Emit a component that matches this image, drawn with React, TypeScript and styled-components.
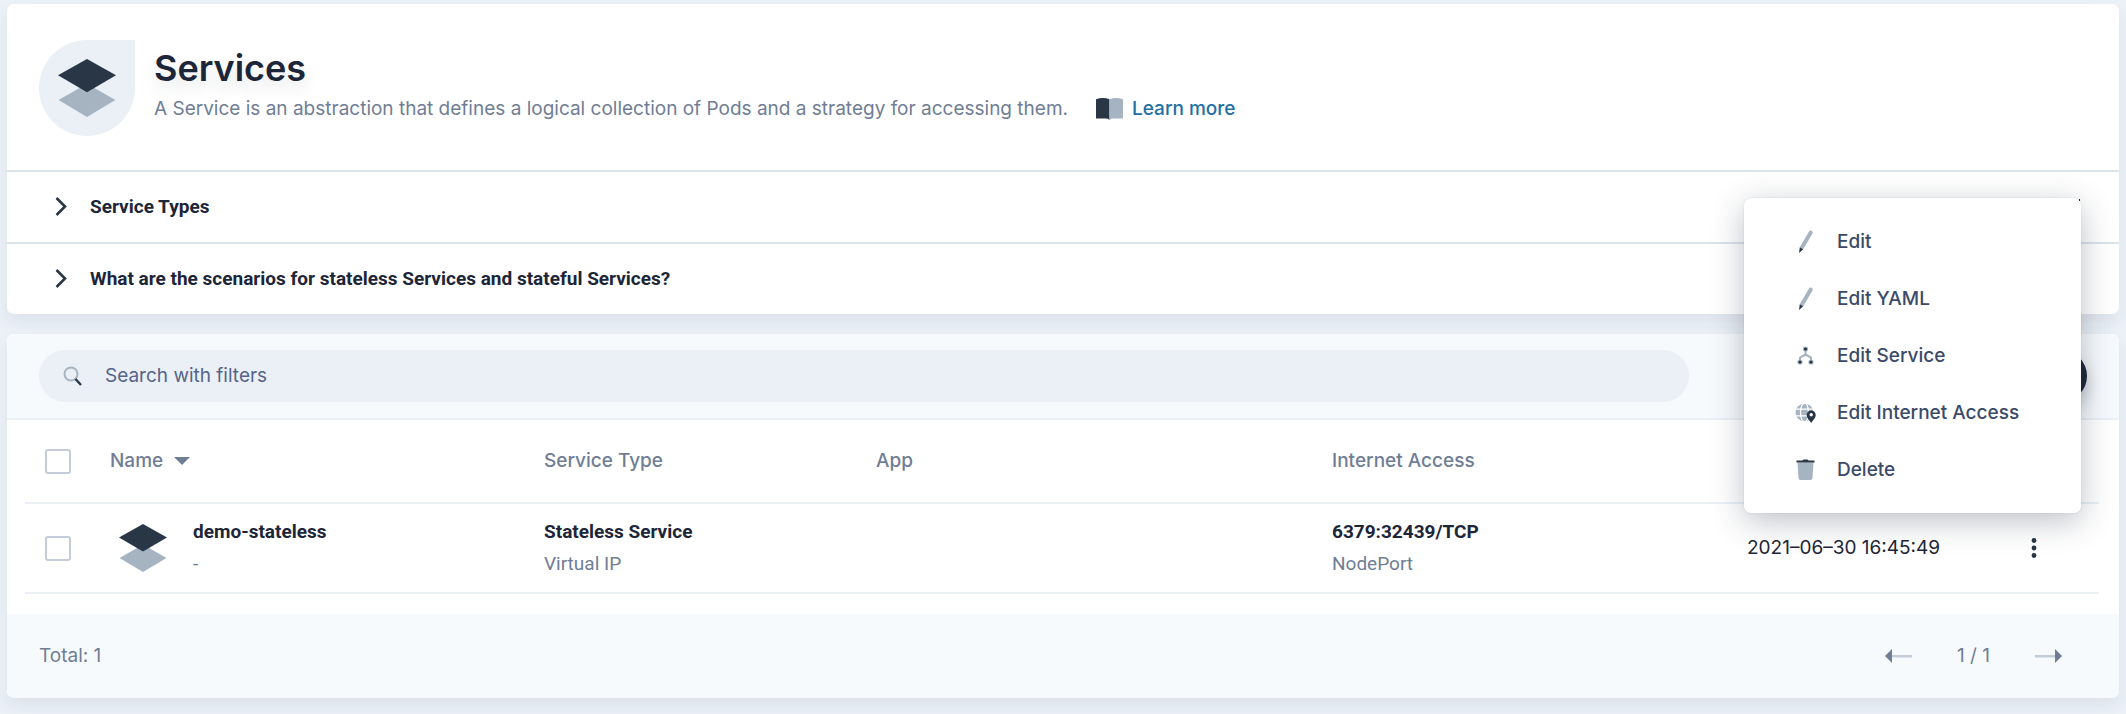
import React from 'react';
import styled, { createGlobalStyle } from 'styled-components';

const ink = '#1d2538';
const iconDark = '#283646';
const iconLight = '#a6b4c2';
const muted = '#6f7d95';
const line = '#eaf0f6';

const GlobalStyle = createGlobalStyle`
  *, *::before, *::after { box-sizing: border-box; }
  body {
    margin: 0;
    background: #ebf1f7;
    color: ${ink};
    font-family: Inter, 'Liberation Sans', sans-serif;
    font-size: 19px;
    line-height: 32px;
  }
  button, input { font: inherit; color: inherit; }
`;

const Page = styled.main`
  display: flex;
  flex-direction: column;
  gap: 20px;
  padding: 4px 7px 16px;
`;

const Card = styled.section`
  background: #fff;
  border-radius: 7px;
  box-shadow: 0 8px 16px rgba(36, 46, 66, 0.07);
`;

const Banner = styled.header`
  display: flex;
  gap: 19px;
  padding: 36px 32px 34px;
`;

const IconTile = styled.div`
  display: flex;
  align-items: center;
  justify-content: center;
  width: 96px;
  height: 96px;
  background: #eaf0f6;
  border-radius: 48px 0 48px 48px;
`;

const BannerText = styled.div`
  padding-top: 8px;
`;

const Title = styled.h1`
  margin: 0;
  font-size: 36px;
  font-weight: 600;
  line-height: 40px;
  text-shadow: 0 8px 16px rgba(36, 46, 66, 0.12);
`;

const Description = styled.p`
  display: flex;
  align-items: center;
  margin: 0;
  color: ${muted};
  line-height: 42px;
`;

const LearnMore = styled.a`
  display: flex;
  align-items: center;
  gap: 9px;
  margin-left: 28px;
  color: #216fa3;
  font-weight: 500;
  text-decoration: none;
`;

const Question = styled.button`
  display: flex;
  align-items: center;
  gap: 23px;
  width: 100%;
  height: 72px;
  padding: 0 48px;
  border: 0;
  border-top: 2px solid #dbe3ec;
  background: none;
  font-family: Roboto, sans-serif;
  font-weight: 700;
  text-align: left;
`;

const Toolbar = styled.div`
  display: flex;
  justify-content: space-between;
  padding: 16px 32px;
  background: #f6fafd;
  border-bottom: 2px solid ${line};
  border-radius: 7px 7px 0 0;
`;

const SearchBox = styled.label`
  display: flex;
  flex: 1;
  align-items: center;
  gap: 22px;
  height: 52px;
  padding: 0 24px;
  background: #eaf0f6;
  border-radius: 26px;
`;

const SearchInput = styled.input`
  flex: 1;
  padding: 0;
  border: 0;
  outline: 0;
  background: none;
  &::placeholder { color: #56648a; opacity: 1; }
`;

const Actions = styled.div`
  display: flex;
  justify-content: flex-end;
  width: 398px;
`;

const CreateButton = styled.button`
  width: 160px;
  height: 52px;
  border: 0;
  border-radius: 26px;
  background: ${ink};
  box-shadow: 0 8px 16px rgba(36, 46, 66, 0.28);
`;

const TableArea = styled.div`
  padding: 0 20px 20px 18px;
`;

const Table = styled.table`
  width: 100%;
  table-layout: fixed;
  border-collapse: separate;
  border-spacing: 0;
`;

const Col = styled.col<{ $width?: number }>`
  width: ${(p) => (p.$width ? `${p.$width}px` : 'auto')};
`;

const HeadCell = styled.th<{ $check?: boolean }>`
  height: 84px;
  padding: ${(p) => (p.$check ? '0 0 0 20px' : '0')};
  border-bottom: 2px solid ${line};
  color: ${muted};
  font-weight: 500;
  text-align: left;
`;

const Cell = styled.td<{ $check?: boolean }>`
  height: 90px;
  padding: ${(p) => (p.$check ? '0 0 0 20px' : '0')};
  border-bottom: 2px solid ${line};
`;

const SortButton = styled.button`
  display: flex;
  align-items: center;
  gap: 11px;
  padding: 0;
  border: 0;
  background: none;
`;

const Checkbox = styled.input`
  display: block;
  appearance: none;
  width: 26px;
  height: 25px;
  margin: 0;
  border: 2px solid #c3ccd8;
  border-radius: 3px;
  background: #fff;
`;

const Resource = styled.div`
  display: flex;
  align-items: center;
  gap: 26px;
  padding-left: 9px;
`;

const Primary = styled.div`
  font-family: Roboto, sans-serif;
  font-weight: 700;
`;

const Secondary = styled.div`
  font-family: Roboto, sans-serif;
  color: ${muted};
`;

const MoreAnchor = styled.div`
  position: relative;
  width: 32px;
  height: 32px;
`;

const MoreButton = styled.button`
  display: flex;
  align-items: center;
  justify-content: center;
  width: 32px;
  height: 32px;
  padding: 0;
  border: 0;
  background: none;
`;

const Menu = styled.div`
  position: absolute;
  right: -31px;
  bottom: calc(100% + 19px);
  width: 337px;
  padding: 15px 0;
  background: #fff;
  border-radius: 7px;
  box-shadow: 0 8px 32px rgba(36, 46, 66, 0.3), 0 0 2px rgba(36, 46, 66, 0.12);

  &::after {
    content: '';
    position: absolute;
    top: 1px;
    right: 1px;
    width: 1px;
    height: 2px;
    background: ${ink};
  }
`;

const MenuItem = styled.button`
  display: flex;
  align-items: center;
  gap: 20px;
  width: 100%;
  height: 57px;
  padding: 0 49px;
  border: 0;
  background: none;
  color: #3b4a68;
  font-weight: 500;
  text-align: left;
`;

const Footer = styled.footer`
  display: flex;
  align-items: center;
  justify-content: space-between;
  height: 84px;
  padding: 0 57px 0 32px;
  background: #f6fafd;
  border-radius: 0 0 7px 7px;
  color: ${muted};
`;

const Pager = styled.nav`
  display: flex;
  align-items: center;
  gap: 42px;
`;

const PageNumber = styled.span`
  min-width: 39px;
  text-align: center;
`;

const PageButton = styled.button`
  display: flex;
  align-items: center;
  height: 32px;
  padding: 0;
  border: 0;
  background: none;
`;

const Layers = ({ size }: { size: number }) => (
  <svg width={size} height={size} viewBox="0 0 48 48" aria-hidden="true">
    <path d="M24 20.500 47.500 34 24 48 .5 34z" fill={iconLight} />
    <path d="M24 0 48 13.500 24 27.500 0 13.500z" fill={iconDark} />
  </svg>
);

const Book = () => (
  <svg width="27" height="22" viewBox="0 0 27 22" aria-hidden="true">
    <path d="M0 1.200Q7-1 13.500 1.200V22Q12 20.600 9.500 20.600H0z" fill={iconDark} />
    <path d="M27 1.200Q20-1 13.500 1.200V22Q15 20.600 17.500 20.600H27z" fill={iconLight} />
  </svg>
);

const Chevron = () => (
  <svg width="12" height="20" viewBox="0 0 12 20" fill="none" aria-hidden="true">
    <path d="M1.500 1 10 9.500 1.500 18" stroke={iconDark} strokeWidth="2.600" />
  </svg>
);

const Magnifier = () => (
  <svg width="20" height="20" viewBox="0 0 20 20" fill="none" aria-hidden="true">
    <circle cx="8" cy="8" r="6.500" stroke={iconLight} strokeWidth="2" />
    <path d="M12.500 13 18 19" stroke={iconDark} strokeWidth="2.400" />
  </svg>
);

const SortArrow = () => (
  <svg width="16" height="8" viewBox="0 0 16 8" aria-hidden="true">
    <path d="M0 0H16L8 8z" fill={muted} />
  </svg>
);

const Dots = () => (
  <svg width="6" height="22" viewBox="0 0 6 22" fill={iconDark} aria-hidden="true">
    <circle cx="3" cy="3.500" r="2.400" />
    <circle cx="3" cy="11" r="2.400" />
    <circle cx="3" cy="18.500" r="2.400" />
  </svg>
);

const Pencil = () => (
  <svg width="24" height="24" viewBox="0 0 24 24" aria-hidden="true">
    <path
      d="M17.300.6Q19.900.5 19.800 2.900L10.200 19.300 6.800 17.300 16 1.600Q16.500.8 17.300.6z"
      fill={iconLight}
    />
    <path d="M6.800 17.300 10.200 19.300 6 23z" fill={iconDark} />
  </svg>
);

const Network = () => (
  <svg width="24" height="24" viewBox="0 0 24 24" fill="none" aria-hidden="true">
    <path d="M12.500 5V10.500M7 18V13.500L12.500 10.500 18 13.500V18" stroke={iconLight} strokeWidth="2" />
    <circle cx="12.500" cy="5" r="2.600" fill={iconLight} />
    <circle cx="7" cy="18" r="2.600" fill={iconLight} />
    <circle cx="18" cy="18" r="2.600" fill={iconLight} />
    <circle cx="12.500" cy="5" r="1.600" fill={iconDark} />
    <circle cx="7" cy="18" r="1.600" fill={iconDark} />
    <circle cx="18" cy="18" r="1.600" fill={iconDark} />
  </svg>
);

const GlobePin = () => (
  <svg width="24" height="24" viewBox="0 0 24 24" fill="none" aria-hidden="true">
    <circle cx="11.500" cy="11.500" r="9" fill={iconLight} />
    <path d="M2 8.200H21M2 14.800H21" stroke="#fff" strokeWidth="1.300" />
    <ellipse cx="11.500" cy="11.500" rx="4" ry="9.500" stroke="#fff" strokeWidth="1.300" />
    <path
      d="M18.200 9.500A4.500 4.500 0 0 0 13.700 14C13.700 17 16 18.500 18.200 22 20.400 18.500 22.700 17 22.700 14A4.500 4.500 0 0 0 18.200 9.500z"
      fill={iconDark}
    />
    <circle cx="18.200" cy="13.800" r="1.700" fill="#fff" />
  </svg>
);

const Trash = () => (
  <svg width="24" height="24" viewBox="0 0 24 24" aria-hidden="true">
    <path d="M4.500 4.500H20.500L19.500 20Q19.300 22 17.500 22H7.500Q5.700 22 5.500 20z" fill={iconLight} />
    <path d="M3.500 2.600H9.500L10.500 1.400H14.500L15.500 2.600H21.500V4.500H3.500z" fill={iconDark} />
  </svg>
);

const PageArrow = ({ next }: { next?: boolean }) => (
  <svg width="27" height="14" viewBox="0 0 27 14" aria-hidden="true">
    <path d={next ? 'M0 6H20V8.500H0z' : 'M7 6H27V8.500H7z'} fill="#c3cdd8" />
    <path d={next ? 'M20 0 27 7 20 14z' : 'M7 0 0 7 7 14z'} fill={muted} />
  </svg>
);

const questions = ['Service Types', 'What are the scenarios for stateless Services and stateful Services?'];

const menuItems = [
  { label: 'Edit', icon: <Pencil /> },
  { label: 'Edit YAML', icon: <Pencil /> },
  { label: 'Edit Service', icon: <Network /> },
  { label: 'Edit Internet Access', icon: <GlobePin /> },
  { label: 'Delete', icon: <Trash /> },
];

export default function App() {
  return (
    <>
      <GlobalStyle />
      <Page>
        <Card>
          <Banner>
            <IconTile>
              <Layers size={58} />
            </IconTile>
            <BannerText>
              <Title>Services</Title>
              <Description>
                A Service is an abstraction that defines a logical collection of Pods and a strategy for accessing them.
                <LearnMore href="#learn-more">
                  <Book />
                  Learn more
                </LearnMore>
              </Description>
            </BannerText>
          </Banner>
          {questions.map((text) => (
            <Question key={text} type="button" aria-expanded="false">
              <Chevron />
              {text}
            </Question>
          ))}
        </Card>

        <Card>
          <Toolbar>
            <SearchBox>
              <Magnifier />
              <SearchInput type="text" placeholder="Search with filters" aria-label="Search with filters" />
            </SearchBox>
            <Actions>
              <CreateButton type="button" aria-label="Create" />
            </Actions>
          </Toolbar>

          <TableArea>
            <Table>
              <colgroup>
                <Col $width={85} />
                <Col $width={434} />
                <Col $width={332} />
                <Col />
                <Col $width={415} />
                <Col $width={271} />
                <Col $width={81} />
              </colgroup>
              <thead>
                <tr>
                  <HeadCell $check>
                    <Checkbox type="checkbox" aria-label="Select all" />
                  </HeadCell>
                  <HeadCell>
                    <SortButton type="button">
                      Name
                      <SortArrow />
                    </SortButton>
                  </HeadCell>
                  <HeadCell>Service Type</HeadCell>
                  <HeadCell>App</HeadCell>
                  <HeadCell>Internet Access</HeadCell>
                  <HeadCell />
                  <HeadCell />
                </tr>
              </thead>
              <tbody>
                <tr>
                  <Cell $check>
                    <Checkbox type="checkbox" aria-label="Select demo-stateless" />
                  </Cell>
                  <Cell>
                    <Resource>
                      <Layers size={48} />
                      <div>
                        <Primary>demo-stateless</Primary>
                        <Secondary>-</Secondary>
                      </div>
                    </Resource>
                  </Cell>
                  <Cell>
                    <Primary>Stateless Service</Primary>
                    <Secondary>Virtual IP</Secondary>
                  </Cell>
                  <Cell />
                  <Cell>
                    <Primary>6379:32439/TCP</Primary>
                    <Secondary>NodePort</Secondary>
                  </Cell>
                  <Cell>2021–06–30 16:45:49</Cell>
                  <Cell>
                    <MoreAnchor>
                      <MoreButton type="button" aria-label="More actions" aria-haspopup="menu" aria-expanded="true">
                        <Dots />
                      </MoreButton>
                      <Menu role="menu">
                        {menuItems.map(({ label, icon }) => (
                          <MenuItem key={label} type="button" role="menuitem">
                            {icon}
                            {label}
                          </MenuItem>
                        ))}
                      </Menu>
                    </MoreAnchor>
                  </Cell>
                </tr>
              </tbody>
            </Table>
          </TableArea>

          <Footer>
            <span>Total: 1</span>
            <Pager aria-label="Pagination">
              <PageButton type="button" aria-label="Previous page">
                <PageArrow />
              </PageButton>
              <PageNumber>1 / 1</PageNumber>
              <PageButton type="button" aria-label="Next page">
                <PageArrow next />
              </PageButton>
            </Pager>
          </Footer>
        </Card>
      </Page>
    </>
  );
}
